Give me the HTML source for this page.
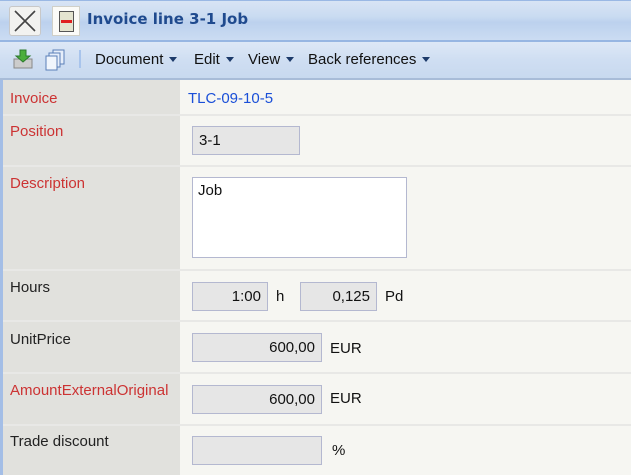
<!DOCTYPE html>
<html><head><style>
body{margin:0;width:631px;height:475px;overflow:hidden;background:#f6f6f2;font-family:"Liberation Sans",sans-serif;font-size:15px;position:relative}
.abs{position:absolute}
#title{left:0;top:0;width:631px;height:40px;background:linear-gradient(#d8e4f4,#c9dbf1 40%,#bcd1ee 55%,#cbdcf2);border-top:1px solid #9ab8e4;box-sizing:border-box}
#tb{left:0;top:40px;width:631px;height:40px;background:linear-gradient(#dde8f6,#cfdef2 50%,#c8d9ef);border-top:2px solid #97b6e2;border-bottom:2px solid #a8bcd8;box-sizing:border-box}
.lab{position:absolute;left:10px;color:#cc3333}
.lab.b{color:#222}
.inp{position:absolute;background:#e6e6e6;border:1px solid #b4b8d0;box-sizing:border-box;height:29px;text-align:right;padding-right:6px;line-height:27px;color:#111}
.u{position:absolute;color:#111}
.sep{position:absolute;left:3px;width:628px;height:2px;background:#e8e8e6}
.menu{position:absolute;top:51px;color:#111}
.menu:after{content:"";display:inline-block;margin-left:6px;border-left:4px solid transparent;border-right:4px solid transparent;border-top:5px solid #1c3a6a;vertical-align:2px}
</style></head><body>
<div id="title" class="abs"></div>
<div class="abs" style="left:9px;top:6px;width:30px;height:28px;background:#f2f2f0;border:1px solid #c8c8c8;border-radius:3px"><svg width="30" height="28"><path d="M5 4L25 24M25 4L5 24" stroke="#444" stroke-width="1.6"/></svg></div>
<div class="abs" style="left:52px;top:6px;width:26px;height:28px;background:#fbfbf8;border:1px solid #d0d0c8"><div style="margin:4px 6px;width:13px;height:19px;background:#e4e4d0;border:1px solid #555;position:relative"><div style="position:absolute;left:1px;top:8px;width:11px;height:3px;background:#e02020"></div></div></div>
<div class="abs" style="left:87px;top:10px;color:#1f4a8e;font-weight:bold;font-size:15px;font-family:'DejaVu Sans',sans-serif">Invoice line 3-1 Job</div>
<div id="tb" class="abs"></div>
<svg class="abs" style="left:12px;top:48px" width="24" height="24"><rect x="2" y="11" width="18" height="9" fill="#ccc" stroke="#888"/><path d="M8 2h6v6h4l-7 6-7-6h4z" fill="#4cae3c" stroke="#2c7a2c"/></svg>
<svg class="abs" style="left:44px;top:48px" width="24" height="24"><rect x="9" y="2" width="11" height="14" fill="#e6eefa" stroke="#5a7fb8"/><rect x="5" y="5" width="11" height="14" fill="#e6eefa" stroke="#5a7fb8"/><rect x="2" y="8" width="11" height="14" fill="#f0f5fc" stroke="#5a7fb8"/></svg>
<div class="abs" style="left:79px;top:50px;width:2px;height:18px;background:#a8c4ec"></div>
<div class="menu" style="left:95px">Document</div>
<div class="menu" style="left:194px">Edit</div>
<div class="menu" style="left:248px">View</div>
<div class="menu" style="left:308px">Back references</div>
<div class="abs" style="left:0;top:80px;width:3px;height:395px;background:#a4bee6"></div>
<div class="abs" style="left:3px;top:80px;width:177px;height:395px;background:#e1e1dd"></div>
<div class="sep" style="top:114px"></div><div class="sep" style="top:165px"></div><div class="sep" style="top:269px"></div><div class="sep" style="top:320px"></div><div class="sep" style="top:372px"></div><div class="sep" style="top:424px"></div>
<div class="lab" style="top:90px">Invoice</div>
<div class="abs" style="left:188px;top:90px;color:#1a4fd8">TLC-09-10-5</div>
<div class="lab" style="top:123px">Position</div>
<div class="inp" style="left:192px;top:126px;width:108px;text-align:left;padding-left:6px">3-1</div>
<div class="lab" style="top:175px">Description</div>
<div class="abs" style="left:192px;top:177px;width:215px;height:81px;background:#fff;border:1px solid #b4b8d0;box-sizing:border-box;padding:4px 5px;color:#111">Job</div>
<div class="lab b" style="top:279px">Hours</div>
<div class="inp" style="left:192px;top:282px;width:76px">1:00</div><div class="u" style="left:276px;top:288px">h</div>
<div class="inp" style="left:300px;top:282px;width:77px">0,125</div><div class="u" style="left:385px;top:288px">Pd</div>
<div class="lab b" style="top:331px">UnitPrice</div>
<div class="inp" style="left:192px;top:333px;width:130px">600,00</div><div class="u" style="left:330px;top:340px">EUR</div>
<div class="lab" style="top:382px">AmountExternalOriginal</div>
<div class="inp" style="left:192px;top:385px;width:130px">600,00</div><div class="u" style="left:330px;top:390px">EUR</div>
<div class="lab b" style="top:433px">Trade discount</div>
<div class="inp" style="left:192px;top:436px;width:130px"></div><div class="u" style="left:332px;top:442px">%</div>
</body></html>
